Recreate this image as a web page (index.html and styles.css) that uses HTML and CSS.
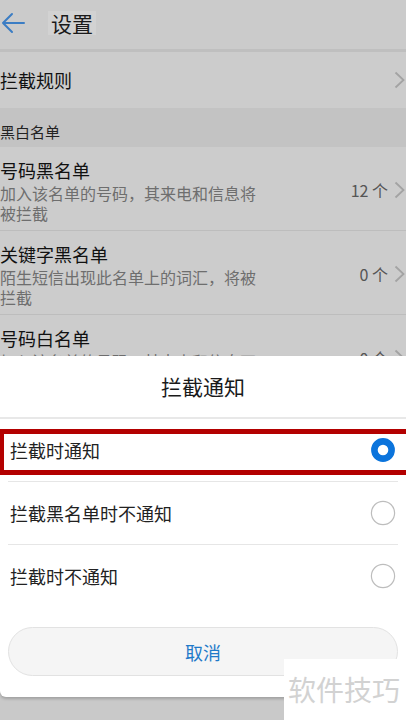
FILE: index.html
```html
<!DOCTYPE html>
<html lang="zh-CN">
<head>
    <meta charset="utf-8">
    <title>设置</title>
    <link rel="stylesheet" href="styles.css">
</head>
<body>
    <div id="screen">
        <div class="topbar">
            <svg class="back" width="26" height="24" viewBox="0 0 26 24">
                <path d="M24 12H3M12 3L3 12l9 9" fill="none" stroke="#3b7dc4" stroke-width="2" stroke-linecap="round" stroke-linejoin="round"/>
            </svg>
            <span class="topbar-title">设置</span>
        </div>

        <div class="row row-single">
            <div class="row-text"><div class="row-title">拦截规则</div></div>
            <svg class="chevron" width="12" height="18" viewBox="0 0 12 18"><path d="M1.5 1.5L9.5 9l-8 7.5" fill="none" stroke="#a3a3a3" stroke-width="1.8"/></svg>
        </div>

        <div class="section">黑白名单</div>

        <div class="row">
            <div class="row-text">
                <div class="row-title">号码黑名单</div>
                <div class="row-sub">加入该名单的号码，其来电和信息将被拦截</div>
            </div>
            <span class="row-count">12 个</span>
            <svg class="chevron" width="12" height="18" viewBox="0 0 12 18"><path d="M1.5 1.5L9.5 9l-8 7.5" fill="none" stroke="#a3a3a3" stroke-width="1.8"/></svg>
        </div>
        <div class="row">
            <div class="row-text">
                <div class="row-title">关键字黑名单</div>
                <div class="row-sub">陌生短信出现此名单上的词汇，将被拦截</div>
            </div>
            <span class="row-count">0 个</span>
            <svg class="chevron" width="12" height="18" viewBox="0 0 12 18"><path d="M1.5 1.5L9.5 9l-8 7.5" fill="none" stroke="#a3a3a3" stroke-width="1.8"/></svg>
        </div>
        <div class="row">
            <div class="row-text">
                <div class="row-title">号码白名单</div>
                <div class="row-sub">加入该名单的号码，其来电和信息不会被拦截</div>
            </div>
            <span class="row-count">0 个</span>
            <svg class="chevron" width="12" height="18" viewBox="0 0 12 18"><path d="M1.5 1.5L9.5 9l-8 7.5" fill="none" stroke="#a3a3a3" stroke-width="1.8"/></svg>
        </div>
        <div class="section section-low"></div>
        <div class="row row-single"></div>

        <!-- dialog over the settings page -->
        <div class="sheet">
            <div class="sheet-title">拦截通知</div>
            <div class="options">
                <div class="option">
                    <span>拦截时通知</span>
                    <svg width="26" height="26" viewBox="0 0 26 26"><circle cx="13" cy="13" r="8.6" fill="#fff" stroke="#0b74dc" stroke-width="6.6"/></svg>
                    <div class="mark"></div>
                </div>
                <div class="option">
                    <span>拦截黑名单时不通知</span>
                    <svg width="26" height="26" viewBox="0 0 26 26"><circle cx="13" cy="13" r="11.6" fill="#fff" stroke="#bdbdbd" stroke-width="1.2"/></svg>
                </div>
                <div class="option">
                    <span>拦截时不通知</span>
                    <svg width="26" height="26" viewBox="0 0 26 26"><circle cx="13" cy="13" r="11.6" fill="#fff" stroke="#bdbdbd" stroke-width="1.2"/></svg>
                </div>
            </div>
            <div class="cancel">取消</div>
        </div>

        <div class="watermark">软件技巧</div>
    </div>
</body>
</html>
```

FILE: styles.css
```css
html,body{
    margin: 0;
    background-color: #c9c9c9;
}

#screen{
    position: relative;
    width: 406px;
    height: 720px;
    overflow: hidden;
    background-color: #c9c9c9;
    font-family: "Noto Sans CJK SC", "Noto Sans", sans-serif;
    color: #111;
}

.topbar{
    height: 49px;
    display: flex;
    align-items: center;
    background-color: #cbcbcb;
    border-bottom: 3px solid #bfbfbf;
}
.topbar .back{
    margin-top: -3px;
}
.topbar-title{
    margin-left: 22px;
    margin-top: -4px;
    padding: 0 3px;
    background-color: #d2d2d2;
    font-size: 21px;
    line-height: 24px;
    color: #1a1a1a;
}

.row{
    display: flex;
    align-items: center;
    padding: 10px 0 7px 0;
    background-color: #cccccc;
    border-bottom: 1px solid #bdbdbd;
}
.row-single{
    height: 56px;
    padding: 0;
    border-bottom: 0;
}
.row-text{
    flex: 1;
}
.row-title{
    font-size: 18px;
    line-height: 26px;
    color: #111;
}
.row-sub{
    width: 262px;
    font-size: 16px;
    line-height: 20px;
    color: #6e6e6e;
}
.row-count{
    font-size: 16px;
    color: #555;
    margin-right: 6px;
}
.chevron{
    flex-shrink: 0;
    margin-right: 0;
}

.section{
    height: 39px;
    box-sizing: border-box;
    padding-top: 13px;
    background-color: #c3c3c3;
    font-size: 15px;
    line-height: 22px;
    color: #222;
}
.section-low{
    height: 12px;
    padding: 0;
}

.sheet{
    position: absolute;
    left: 0;
    right: 0;
    top: 356px;
    height: 341px;
    background-color: #fff;
    border-radius: 0 0 6px 6px;
    box-shadow: 0 2px 3px rgba(0,0,0,0.2);
}
.sheet-title{
    height: 61px;
    line-height: 61px;
    text-align: center;
    font-size: 21px;
    color: #1a1a1a;
    border-bottom: 2px solid #e8e8e8;
}
.options{
    display: flex;
    flex-direction: column;
}
.option{
    position: relative;
    height: 62px;
    display: flex;
    align-items: center;
    justify-content: space-between;
    margin: 0 8px;
    padding: 0 2px;
    font-size: 18px;
    color: #222;
    border-bottom: 1px solid #e6e6e6;
}
.option:last-child{
    border-bottom: 0;
}
.mark{
    position: absolute;
    top: 10px;
    left: -8px;
    right: -12px;
    height: 36px;
    border-style: solid;
    border-color: #b30000;
    border-width: 5px 4px;
}

.cancel{
    margin: 20px 8px 0 8px;
    height: 49px;
    line-height: 49px;
    box-sizing: border-box;
    border: 1px solid #e2e2e2;
    border-radius: 25px;
    background-color: #f5f5f5;
    text-align: center;
    font-size: 18px;
    color: #1f7ac9;
}

.watermark{
    position: absolute;
    left: 284px;
    top: 659px;
    width: 122px;
    height: 61px;
    background-color: #fff;
    font-size: 28px;
    line-height: 61px;
    text-indent: 4px;
    color: #d2d2d2;
    white-space: nowrap;
}
```
